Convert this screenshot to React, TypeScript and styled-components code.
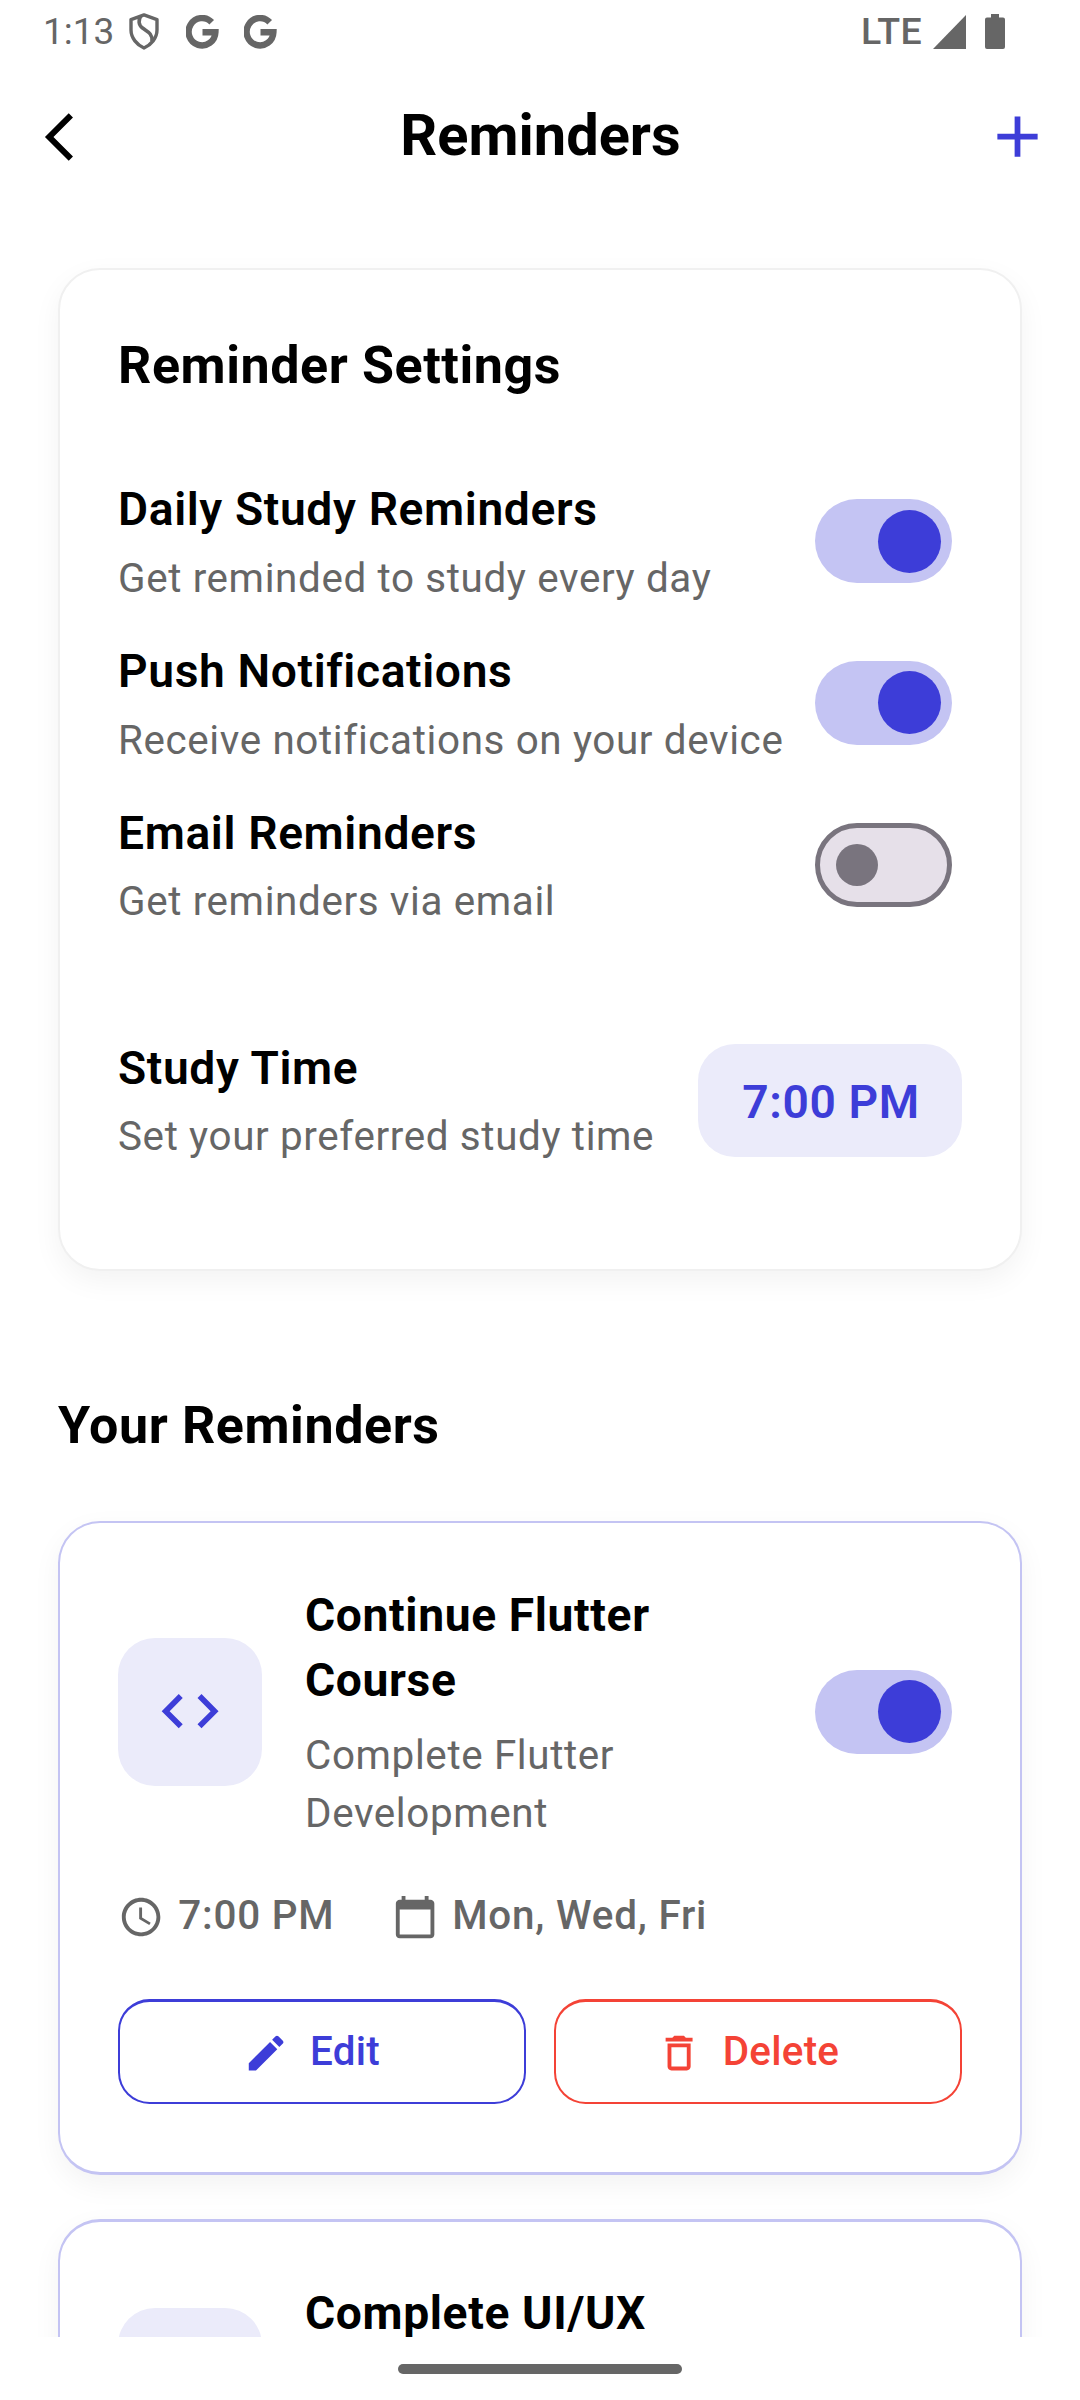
import React, { useState } from 'react';
import styled, { createGlobalStyle } from 'styled-components';

const primary = '#3d3dd8';
const tint = '#ebebfa';
const danger = '#f44336';
const muted = '#666666';

const GlobalStyle = createGlobalStyle`
  * { box-sizing: border-box; }
  body { margin: 0; background: #ffffff; }
`;

const Button = styled.button`
  font: inherit;
  background: none;
  border: 0;
  padding: 0;
  margin: 0;
  cursor: pointer;
`;

const Screen = styled.div`
  width: 1080px;
  height: 2400px;
  display: flex;
  flex-direction: column;
  overflow: hidden;
  background: #ffffff;
  color: #000000;
  font-family: Roboto, sans-serif;
  font-size: 40.4px;
  letter-spacing: 0.62px;
`;

const StatusBar = styled.header`
  flex: none;
  height: 63px;
  padding: 0 75px 0 43px;
  display: flex;
  justify-content: space-between;
  color: ${muted};
`;

const StatusGroup = styled.div`
  display: flex;
  align-items: center;
  svg { display: block; flex: none; }
`;

const Clock = styled.span`
  font-size: 37px;
  line-height: 62px;
  letter-spacing: 0;
  width: 86px;
`;

const Network = styled.span`
  font-size: 37.5px;
  font-weight: 500;
  line-height: 60px;
  padding-bottom: 2px;
  letter-spacing: 0.4px;
  margin-right: 11px;
`;

const Spacer = styled.span<{ $w: number }>`
  flex: none;
  width: ${p => p.$w}px;
`;

const AppBar = styled.div`
  flex: none;
  height: 147px;
  padding: 0 28px 0 44px;
  display: grid;
  grid-template-columns: 55px 1fr 70px;
  align-items: center;
`;

const BarTitle = styled.h1`
  margin: 0;
  font-size: 57.75px;
  font-weight: 700;
  line-height: 74px;
  letter-spacing: 0;
  text-align: center;
  padding-bottom: 3px;
`;

const BarButton = styled(Button)<{ $align: string; $color: string }>`
  display: flex;
  justify-content: ${p => p.$align};
  color: ${p => p.$color};
  svg { display: block; }
`;

const Content = styled.main`
  flex: 1;
  min-height: 0;
  overflow: hidden;
  padding: 58px 58px 0;
`;

const Card = styled.section`
  border: 2px solid #f0f0f0;
  border-radius: 42px;
  background: #ffffff;
  box-shadow: 0 10px 29px rgba(0, 0, 0, 0.05);
`;

const SettingsCard = styled(Card)`
  height: 1003px;
  padding: 59px 58px 44px;
`;

const ReminderCard = styled(Card)<{ $top?: number }>`
  margin-bottom: 44px;
  padding: ${p => 60 - (p.$top ?? 2)}px 58px 68px;
  border-color: #c4c4f3;
  border-width: ${p => p.$top ?? 2}px 2px 3px;
`;

const SectionTitle = styled.h2`
  margin: 0;
  font-size: 52px;
  font-weight: 700;
  line-height: 74px;
  letter-spacing: 0.58px;
`;

const ListTitle = styled(SectionTitle)`
  margin: 118px 0 58px;
`;

const SettingsList = styled.div`
  margin-top: 73.2px;
  display: flex;
  flex-direction: column;
  gap: 30.15px;
`;

const SettingRow = styled.div<{ $gapTop?: number }>`
  flex: none;
  height: 131.65px;
  margin-top: ${p => p.$gapTop ?? 0}px;
  display: flex;
  align-items: center;
  justify-content: space-between;
`;

const SettingText = styled.div`
  display: flex;
  flex-direction: column;
  gap: 7.65px;
  white-space: nowrap;
`;

const SettingTitle = styled.h3`
  margin: 0;
  font-size: 46.2px;
  font-weight: 600;
  line-height: 66px;
`;

const Caption = styled.p`
  margin: 0;
  font-size: 40.4px;
  font-weight: 400;
  line-height: 58px;
  color: ${muted};
`;

const Track = styled(Button)<{ $on: boolean; $lift: number }>`
  flex: none;
  width: 136.5px;
  height: 84px;
  margin: 0 10.5px ${p => p.$lift}px 0;
  border-radius: 42px;
  display: flex;
  align-items: center;
  justify-content: ${p => (p.$on ? 'flex-end' : 'flex-start')};
  padding: ${p => (p.$on ? '0 10.5px' : '0 16px')};
  background: ${p => (p.$on ? '#c4c4f3' : '#e6e0e9')};
  border: ${p => (p.$on ? '0' : '5px solid #79747e')};
`;

const Thumb = styled.span<{ $on: boolean }>`
  width: ${p => (p.$on ? 63 : 42)}px;
  height: ${p => (p.$on ? 63 : 42)}px;
  border-radius: 50%;
  background: ${p => (p.$on ? primary : '#79747e')};
`;

const TimeChip = styled(Button)`
  width: 264px;
  height: 113px;
  padding: 3px 0 0 2px;
  border-radius: 37px;
  background: ${tint};
  color: ${primary};
  font-size: 46.2px;
  font-weight: 600;
  line-height: 66px;
  letter-spacing: 0.62px;
`;

const CourseRow = styled.div<{ $height: number }>`
  height: ${p => p.$height}px;
  display: flex;
  align-items: center;
`;

const IconTile = styled.div`
  flex: none;
  width: 144px;
  height: 148px;
  border-radius: 37px;
  background: ${tint};
  color: ${primary};
  display: flex;
  align-items: center;
  justify-content: center;
`;

const CourseText = styled.div`
  align-self: flex-start;
  flex: 1;
  margin-left: 43px;
  display: flex;
  flex-direction: column;
  gap: 14px;
`;

const CourseTitle = styled.h3`
  margin: 0;
  font-size: 46.2px;
  font-weight: 700;
  line-height: 65px;
  padding-top: 2px;
`;

const Meta = styled.div`
  margin-top: 45px;
  height: 58px;
  display: flex;
  align-items: center;
  color: ${muted};
  font-weight: 500;
  line-height: 56px;
  letter-spacing: 0.8px;
  svg { display: block; margin-top: 5.7px; }
`;

const MetaItem = styled.span<{ $w?: number }>`
  display: flex;
  align-items: flex-start;
  gap: 14px;
  width: ${p => (p.$w ? p.$w + 'px' : 'auto')};
`;

const Actions = styled.div`
  margin-top: 54px;
  display: grid;
  grid-template-columns: 1fr 1fr;
  gap: 28px;
`;

const ActionButton = styled(Button)<{ $color: string }>`
  height: 105px;
  border: 2px solid ${p => p.$color};
  border-top-width: 3px;
  border-radius: 31.5px;
  padding-right: 21px;
  color: ${p => p.$color};
  display: flex;
  align-items: center;
  justify-content: center;
  gap: 20.8px;
  font-weight: 500;
  letter-spacing: 0.26px;
  svg { display: block; margin-top: 2px; }
`;

const ActionLabel = styled.span`
  line-height: 58px;
`;

const NavArea = styled.footer`
  flex: none;
  height: 63px;
  display: flex;
  justify-content: center;
  padding-top: 27px;
  background: #ffffff;
`;

const NavPill = styled.div`
  width: 284px;
  height: 10px;
  border-radius: 5px;
  background: ${muted};
`;

function Glyph({ d, size }: { d: string; size: number }) {
  return (
    <svg width={size} height={size} viewBox="0 0 24 24" fill="currentColor">
      <path d={d} />
    </svg>
  );
}

const paths = {
  code: 'M9.4 16.6L4.8 12l4.6-4.6L8 6l-6 6 6 6 1.4-1.4zm5.2 0l4.6-4.6-4.6-4.6L16 6l6 6-6 6-1.4-1.4z',
  clock:
    'M11.99 2C6.47 2 2 6.48 2 12s4.47 10 9.99 10C17.52 22 22 17.52 22 12S17.52 2 11.99 2zM12 20c-4.42 0-8-3.58-8-8s3.58-8 8-8 8 3.58 8 8-3.58 8-8 8zm.5-13H11v6l5.25 3.15.75-1.23-4.5-2.67z',
  calendar:
    'M20 3h-1V1h-2v2H7V1H5v2H4c-1.1 0-2 .9-2 2v16c0 1.1.9 2 2 2h16c1.1 0 2-.9 2-2V5c0-1.1-.9-2-2-2zm0 18H4V8h16v13z',
  edit: 'M3 17.25V21h3.75L17.81 9.94l-3.75-3.75L3 17.25zM20.71 7.04c.39-.39.39-1.02 0-1.41l-2.34-2.34c-.39-.39-1.02-.39-1.41 0l-1.83 1.83 3.75 3.75 1.83-1.83z',
  trash:
    'M6 19c0 1.1.9 2 2 2h8c1.1 0 2-.9 2-2V7H6v12zM8 9h8v10H8V9zm7.5-5l-1-1h-5l-1 1H5v2h14V4h-3.5z',
  add: 'M19 13h-6v6h-2v-6H5v-2h6V5h2v6h6v2z',
};

function ShieldIcon() {
  return (
    <svg width="30" height="37" viewBox="0 0 30 37" fill="none" stroke="currentColor">
      <path
        strokeWidth="3.4"
        strokeLinejoin="round"
        d="M15 1.9L28 6.6V17C28 25 22 32 15 35C8 32 2 25 2 17V6.6Z"
      />
      <path strokeWidth="3.6" d="M12 3C9 7 9.500 12 13.500 15C18 18.500 23.500 20 23 28" />
    </svg>
  );
}

function GoogleIcon() {
  return (
    <svg width="33" height="34" viewBox="0 0 33 34" fill="none" stroke="currentColor" strokeWidth="6.4">
      <path d="M25.700 7.300A13.400 13.700 0 1 0 29.400 17.300H16.500" />
    </svg>
  );
}

function Toggle({ initial, lift = 0 }: { initial: boolean; lift?: number }) {
  const [on, setOn] = useState(initial);
  return (
    <Track $on={on} $lift={lift} role="switch" aria-checked={on} onClick={() => setOn(!on)}>
      <Thumb $on={on} />
    </Track>
  );
}

const settings = [
  { title: 'Daily Study Reminders', caption: 'Get reminded to study every day', on: true },
  { title: 'Push Notifications', caption: 'Receive notifications on your device', on: true },
  { title: 'Email Reminders', caption: 'Get reminders via email', on: false },
];

export default function App() {
  return (
    <>
      <GlobalStyle />
      <Screen>
        <StatusBar>
          <StatusGroup>
            <Clock>1:13</Clock>
            <ShieldIcon />
            <Spacer $w={27} />
            <GoogleIcon />
            <Spacer $w={25} />
            <GoogleIcon />
          </StatusGroup>
          <StatusGroup>
            <Network>LTE</Network>
            <svg width="33" height="34" viewBox="0 0 33 34" fill="currentColor">
              <path d="M33 0V34H0z" />
            </svg>
            <Spacer $w={19} />
            <svg width="20" height="35" viewBox="0 0 20 35" fill="currentColor">
              <path d="M6 0h8v3.500h4a2 2 0 0 1 2 2V33a2 2 0 0 1-2 2H2a2 2 0 0 1-2-2V5.500a2 2 0 0 1 2-2h4z" />
            </svg>
          </StatusGroup>
        </StatusBar>
        <AppBar>
          <BarButton $align="flex-start" $color="#000000" aria-label="Back">
            <svg width="29" height="48" viewBox="-0.4 2.1 12.08 19.8" fill="currentColor">
              <path d="M11.67 3.87L9.9 2.1 0 12l9.9 9.9 1.77-1.77L3.54 12z" />
            </svg>
          </BarButton>
          <BarTitle>Reminders</BarTitle>
          <BarButton $align="center" $color={primary} aria-label="Add reminder">
            <Glyph d={paths.add} size={69} />
          </BarButton>
        </AppBar>
        <Content>
          <SettingsCard>
            <SectionTitle>Reminder Settings</SectionTitle>
            <SettingsList>
              {settings.map(s => (
                <SettingRow key={s.title}>
                  <SettingText>
                    <SettingTitle>{s.title}</SettingTitle>
                    <Caption>{s.caption}</Caption>
                  </SettingText>
                  <Toggle initial={s.on} lift={1.8} />
                </SettingRow>
              ))}
              <SettingRow $gapTop={73.3}>
                <SettingText>
                  <SettingTitle>Study Time</SettingTitle>
                  <Caption>Set your preferred study time</Caption>
                </SettingText>
                <TimeChip>7:00 PM</TimeChip>
              </SettingRow>
            </SettingsList>
          </SettingsCard>
          <ListTitle>Your Reminders</ListTitle>
          <ReminderCard>
            <CourseRow $height={261}>
              <IconTile>
                <Glyph d={paths.code} size={68.25} />
              </IconTile>
              <CourseText>
                <CourseTitle>
                  Continue Flutter
                  <br />
                  Course
                </CourseTitle>
                <Caption>
                  Complete Flutter
                  <br />
                  Development
                </Caption>
              </CourseText>
              <Toggle initial />
            </CourseRow>
            <Meta>
              <MetaItem $w={274}>
                <Glyph d={paths.clock} size={46.2} />
                7:00 PM
              </MetaItem>
              <MetaItem>
                <Glyph d={paths.calendar} size={46.2} />
                Mon, Wed, Fri
              </MetaItem>
            </Meta>
            <Actions>
              <ActionButton $color={primary}>
                <Glyph d={paths.edit} size={46.2} />
                <ActionLabel>Edit</ActionLabel>
              </ActionButton>
              <ActionButton $color={danger}>
                <Glyph d={paths.trash} size={46.2} />
                <ActionLabel>Delete</ActionLabel>
              </ActionButton>
            </Actions>
          </ReminderCard>
          <ReminderCard $top={3}>
            <CourseRow $height={205}>
              <IconTile />
              <CourseText>
                <CourseTitle>Complete UI/UX</CourseTitle>
              </CourseText>
            </CourseRow>
          </ReminderCard>
        </Content>
        <NavArea>
          <NavPill />
        </NavArea>
      </Screen>
    </>
  );
}
